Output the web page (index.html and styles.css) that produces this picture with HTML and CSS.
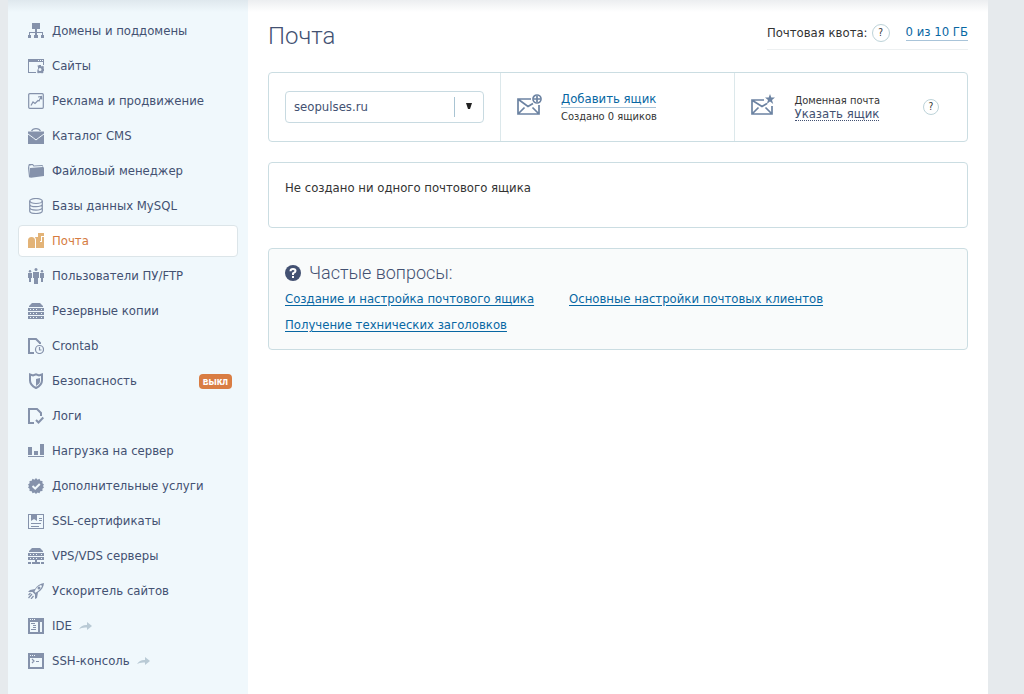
FILE: index.html
```html
<!DOCTYPE html>
<html lang="ru">
<head>
<meta charset="utf-8">
<title>Почта</title>
<link rel="stylesheet" href="styles.css">
</head>
<body>
<div class="page">
  <nav class="sidebar">
    <a class="item" href="#"><svg class="icon" viewBox="0 0 16 16"><path d="M4 0h8v6H9v3h6v3h1v3h-3v-3h1v-2H9v2h1v3H6v-3h1v-2H2v2h1v3H0v-3h1V9h6V6H4z"/></svg><span>Домены и поддомены</span></a>
    <a class="item" href="#"><svg class="icon" viewBox="0 0 16 16"><path fill-rule="evenodd" d="M0 1h16v6h-1V4H1v10h7v1H0zM10 2v1h1V2zm2 0v1h1V2zm2 0v1h1V2z"/><path fill-rule="evenodd" d="M11 7h2v1l1 .4 1-.7 1 1.200-.5 1 .5 1v2.200l-.8.2.3 1.200-1.500 1-1-.8-1 .5-1-.5-1 .8-1-1.500.6-1-.6-1.200 1-.4V9l-.5-1L10 7l1 .8zm1 3a1.500 1.500 0 100 3 1.500 1.500 0 000-3z"/></svg><span>Сайты</span></a>
    <a class="item" href="#"><svg class="icon line" viewBox="0 0 16 16"><rect x=".7" y=".7" width="14.600" height="14.600" rx="1"/><path d="M3 12.500l2-3.500 2 1.500 3-3 1 .5 2-4M10 4l3.500-.5.3 3"/></svg><span>Реклама и продвижение</span></a>
    <a class="item" href="#"><svg class="icon" viewBox="0 0 16 16"><path d="M3 3Q4 0 8 0t5 3h-1.300Q11 1.200 8 1.200T4.300 3zM0 3.500h16V16H0z"/><path class="cut thin" d="M0 6l5.500 4L8 12l2.500-2L16 6"/><path d="M7 8h2v2H7z"/></svg><span>Каталог CMS</span></a>
    <a class="item" href="#"><svg class="icon" viewBox="0 0 16 16"><path d="M.5 2L1 1h4l1 1.500 8.500-.5.7 1.700L16 5v8l-13 1.800-2-.6L0 5zm.8.800v9.700L2 5l12.500-1V3L5.500 3.500 4.300 2z" fill-rule="evenodd"/></svg><span>Файловый менеджер</span></a>
    <a class="item" href="#"><svg class="icon line" viewBox="0 0 16 16"><ellipse cx="8" cy="3" rx="6.300" ry="2.500"/><path d="M1.700 3v10c0 3.300 12.600 3.300 12.600 0V3M1.700 6.200c0 3.300 12.600 3.300 12.600 0M1.700 9.600c0 3.300 12.600 3.300 12.600 0"/></svg><span>Базы данных MySQL</span></a>
    <a class="item active" href="#"><svg class="icon" viewBox="0 0 16 16"><path d="M0 15V7.500Q0 4 3.500 4T7 7.500V15zM8 15V7Q8 5.500 6.800 4H10V0h6v3h-3v5h-1v1h2V4h2v11z"/></svg><span>Почта</span></a>
    <a class="item" href="#"><svg class="icon" viewBox="0 0 16 16"><circle cx="8" cy="1.500" r="1.500"/><circle cx="2" cy="3.200" r="1.200"/><circle cx="14" cy="3.200" r="1.200"/><path d="M5 4h6v6h-1v6H6v-6H5zM0 5h4v5H3v4H1v-4H0zM12 5h4v5h-1v4h-2v-4h-1z"/></svg><span>Пользователи ПУ/FTP</span></a>
    <a class="item" href="#"><svg class="icon" viewBox="0 0 16 16"><path fill-rule="evenodd" d="M4 0h8l3 3v1H1V3zM0 5h16v3H0zM0 9h16v3H0zM0 13h16v3H0zM2 6v1h1V6zm3 0v1h1V6zm3 0v1h1V6zm5 0v1h1V6zM2 10v1h1v-1zm3 0v1h1v-1zm3 0v1h1v-1zm5 0v1h1v-1zM2 14v1h1v-1zm3 0v1h1v-1zm3 0v1h1v-1zm5 0v1h1v-1z"/></svg><span>Резервные копии</span></a>
    <a class="item" href="#"><svg class="icon line" viewBox="0 0 16 16"><path class="bold" d="M6 15H1V1h7l4 4v1"/><circle cx="11.500" cy="11.500" r="4"/><path d="M11.500 9v3h2"/></svg><span>Crontab</span></a>
    <a class="item" href="#"><svg class="icon" viewBox="0 0 16 16"><path class="draw bold" d="M2 1.500l3 1 3-1.200 3 1.200 3-1v6c0 3-2 5.500-6 7.500-4-2-6-4.500-6-7.500z"/><path d="M8 6l4-1v3c0 2-1.500 3.500-4 5z"/></svg><span>Безопасность</span><span class="badge">выкл</span></a>
    <a class="item" href="#"><svg class="icon line" viewBox="0 0 16 16"><path class="bold" d="M6 15H1V1h8l4 4v3M8 12l2.500 2.500L15.300 9.500"/></svg><span>Логи</span></a>
    <a class="item" href="#"><svg class="icon" viewBox="0 0 16 16"><path d="M0 4h4v8H0zM6 8h4v4H6zM12 1h4v11h-4zM0 13h16v1H0z"/></svg><span>Нагрузка на сервер</span></a>
    <a class="item" href="#"><svg class="icon" viewBox="0 0 16 16"><path d="M8 0l1.500 1.700L11.500.8l.8 2 2.200.3-.1 2.200L16 6.500 15 8l1 1.500-1.600 1.300.1 2.100-2.200.4-.8 2-2-.9L8 16l-1.500-1.600-2 .9-.8-2-2.200-.4.1-2.100L0 9.500 1 8 0 6.500l1.600-1.200-.1-2.200 2.200-.3.8-2 2 .9z"/><path class="cut" d="M4.500 8l2.700 2.500L11.800 6"/></svg><span>Дополнительные услуги</span></a>
    <a class="item" href="#"><svg class="icon" viewBox="0 0 16 16"><path fill-rule="evenodd" d="M0 1h16v15H0zm1 1v13h14V2z"/><path d="M3 1h6v7L6 6 3 8zM11 5h3v1h-3zM11 7h3v1h-3zM3 10h10v1H3zM3 13h8v1H3z"/></svg><span>SSL-сертификаты</span></a>
    <a class="item" href="#"><svg class="icon" viewBox="0 0 16 16"><path fill-rule="evenodd" d="M4 0h8l3 3v1H1V3zM0 5h16v3H0zM0 9h16v3H0zM2 6v1h1V6zm3 0v1h1V6zm3 0v1h1V6zm5 0v1h1V6zM2 10v1h1v-1zm3 0v1h1v-1zm3 0v1h1v-1zm5 0v1h1v-1zM7 12h2v2h3v2H4v-2h3zM0 14h3v2H0zM13 14h3v2h-3z"/></svg><span>VPS/VDS серверы</span></a>
    <a class="item" href="#"><svg class="icon" viewBox="0 0 16 16"><path fill-rule="evenodd" d="M16 0c-.3 4-2 7-6 9.500L9 15l-2 1v-4.500L4.500 9 0 9l2-2 5-1C9 2.500 12 .5 16 0zm-3 2C10 3 8 5 6.500 8.500l1 1.200C11 8 13 6 14 3z"/><circle cx="11" cy="5" r="1.500"/><path class="draw" d="M4 11l-3.500 4M2.500 10l-2 2M5.500 13L3 16"/></svg><span>Ускоритель сайтов</span></a>
    <a class="item" href="#"><svg class="icon" viewBox="0 0 16 16"><path fill-rule="evenodd" d="M0 0h16v16H0zM2 1v1h1V1zm2 0v1h1V1zm2 0v1h1V1zM2 4v10h8V4zm10 0v10h2V4z"/><path d="M3 5h4v1H3zM5 7h3v1H5zM5 9h3v1H5zM3 11h5v1H3z"/></svg><span>IDE</span><svg class="out" viewBox="0 0 13 9"><path d="M0 7Q3 2.500 8 3V0l5 4-5 4V5.500Q3 5 0 7z"/></svg></a>
    <a class="item" href="#"><svg class="icon" viewBox="0 0 16 16"><path fill-rule="evenodd" d="M0 0h16v16H0zM2 2v1h1V2zm2 0v1h1V2zm2 0v1h1V2zM2 5v9h12V5z"/><path class="draw" d="M4 6l2 2-2 2M8 8.500h3"/></svg><span>SSH-консоль</span><svg class="out" viewBox="0 0 13 9"><path d="M0 7Q3 2.500 8 3V0l5 4-5 4V5.500Q3 5 0 7z"/></svg></a>
  </nav>

  <main class="content">
    <header class="top">
      <h1>Почта</h1>
      <div class="quota"><span>Почтовая квота:</span><button class="help" type="button" aria-label="Справка о квоте">?</button><a class="link" href="#">0 из 10 ГБ</a></div>
    </header>

    <section class="card panel">
      <div class="cell">
        <div class="domain">
          <select aria-label="Домен"><option>seopulses.ru</option></select>
          <svg class="arrow" viewBox="0 0 8 8"><path d="M1 1h6L5 7H3z"/></svg>
        </div>
      </div>
      <div class="cell">
        <svg class="mail" viewBox="0 0 25 22"><path d="M14 5H1v15h21v-9M1.500 5.500l9.500 7 5-3M1.500 19.500l6-6M21.500 19.500l-6-6"/><circle cx="20" cy="5" r="4"/><path d="M17 5h6M20 2v6"/></svg>
        <div class="info"><a class="link" href="#">Добавить ящик</a><small>Создано 0 ящиков</small></div>
      </div>
      <div class="cell">
        <svg class="mail" viewBox="0 0 25 22"><path d="M13 6H1v14h20v-8M1.500 6.500l9.500 6 5-3M1.500 19.500l6-6M20.500 19.500l-6-6"/><path class="star" d="M19 0l1.300 3.500H24L21 6l1.200 4L19 7.600 15.800 10 17 6l-3-2.500h3.700z"/></svg>
        <div class="info tight"><small>Доменная почта</small><button class="assign" type="button">Указать ящик</button></div>
        <button class="help end" type="button" aria-label="Справка о доменной почте">?</button>
      </div>
    </section>

    <section class="card empty">Не создано ни одного почтового ящика</section>

    <section class="card faq">
      <h2><svg class="mark" viewBox="0 0 16 16"><circle cx="8" cy="8" r="8"/><path d="M5.500 6.200Q5.500 4 8 4t2.500 2Q10.500 7.200 8 8.300V10M8 11v2"/></svg>Частые вопросы:</h2>
      <div class="questions">
        <a href="#">Создание и настройка почтового ящика</a>
        <a href="#">Основные настройки почтовых клиентов</a>
        <a href="#">Получение технических заголовков</a>
      </div>
    </section>
  </main>
</div>
</body>
</html>
```
FILE: styles.css
```css
* { box-sizing: border-box; }
body {
  margin: 0;
  background: #e6eaed;
  color: #333;
  font: 13px/18px "DejaVu Sans Condensed", "Noto Sans", sans-serif;
}
button, select { font: inherit; color: inherit; }
.page {
  display: flex;
  min-height: 100vh;
  margin: 0 36px 0 8px;
  background: linear-gradient(rgba(70, 90, 110, .1), rgba(70, 90, 110, 0) 12px) #fff;
}
.sidebar {
  flex: 0 0 240px;
  display: flex;
  flex-direction: column;
  gap: 3px;
  padding: 15px 10px;
  background: linear-gradient(rgba(70, 90, 110, .1), rgba(70, 90, 110, 0) 12px) #f0f8fc;
}
.item {
  display: flex;
  align-items: center;
  height: 32px;
  padding: 0 5px 0 9px;
  border: 1px solid transparent;
  border-radius: 4px;
  color: #435172;
  text-decoration: none;
}
.active { background: #fff; border-color: #dce5e9; color: #d57b41; }
.icon { width: 16px; height: 16px; margin-right: 8px; fill: #8592ab; }
.active .icon { fill: #e3b377; }
.line, .draw { fill: none; stroke: #8592ab; stroke-width: 1.2; }
.bold { stroke-width: 2; }
.cut { fill: none; stroke: #f0f8fc; stroke-width: 2; }
.thin { stroke-width: 1; }
.badge {
  margin-left: auto;
  padding: 0 4px;
  border-radius: 4px;
  background: #d97d43;
  color: #fff;
  font: bold 10px/15px Roboto, sans-serif;
}
.out { width: 13px; height: 9px; margin-left: 7px; fill: #b9cad5; }
.content { flex: 1; min-width: 0; padding: 20px; }
.top { display: flex; justify-content: space-between; height: 52px; }
h1 { margin: 0; color: #435172; font: 300 24px/32px Roboto, sans-serif; }
.quota {
  display: flex;
  align-items: center;
  height: 30px;
  padding-bottom: 4px;
  border-bottom: 1px solid #edf0f1;
}
.help {
  width: 18px;
  height: 18px;
  margin: 0 16px 0 4px;
  padding: 0;
  border: 1px solid #bdd3d9;
  border-radius: 50%;
  background: #fff;
  font-size: 10px;
  line-height: 16px;
}
.link {
  border-bottom: 1px solid #a9c4d9;
  color: #0867a3;
  line-height: 16px;
  text-decoration: none;
}
.card {
  margin-bottom: 20px;
  border: 1px solid #cbdde2;
  border-radius: 4px;
}
.panel { display: grid; grid-template-columns: 231px 1fr 1fr; height: 70px; }
.cell { display: flex; align-items: center; padding: 0 16px; }
.cell + .cell { border-left: 1px solid #dce8eb; }
.domain { position: relative; width: 100%; }
.domain select {
  width: 100%;
  height: 32px;
  padding: 0 8px;
  border: 1px solid #c8dae1;
  border-radius: 4px;
  background: linear-gradient(#a9c4d3, #a9c4d3) right 28px center / 1px 20px no-repeat #fff;
  color: #435172;
  appearance: none;
}
.arrow {
  position: absolute;
  top: 11px;
  right: 11px;
  width: 8px;
  height: 8px;
  fill: #222;
  pointer-events: none;
}
.mail {
  width: 25px;
  height: 22px;
  margin: 0 19px 4px 0;
  fill: none;
  stroke: #6c83a2;
  stroke-width: 1.7;
}
.mail .star { fill: #6c83a2; stroke: none; }
.info { display: flex; flex-direction: column; align-items: flex-start; gap: 1px; }
.tight { gap: 0; }
small { font-size: 11px; line-height: 15px; }
.tight small { line-height: 13px; }
.assign {
  padding: 0;
  border: 0;
  border-bottom: 1px dotted #435172;
  background: none;
  color: #435172;
  line-height: 13px;
}
.end { width: 16px; height: 16px; margin: 0 12px 0 auto; line-height: 14px; }
.empty { min-height: 66px; padding: 16px; }
.faq { padding: 14px 16px 15px; background: #f9fbfb; }
h2 {
  display: flex;
  align-items: center;
  gap: 8px;
  margin: 0 0 7px;
  color: #435172;
  font: 300 18px/20px Roboto, sans-serif;
}
.mark { width: 16px; height: 16px; fill: #435172; }
.mark path { fill: none; stroke: #fff; stroke-width: 2; }
.questions {
  display: grid;
  grid-template-columns: 284px max-content;
  row-gap: 8px;
}
.questions a { color: #0867a3; text-underline-offset: 2px; }
```
